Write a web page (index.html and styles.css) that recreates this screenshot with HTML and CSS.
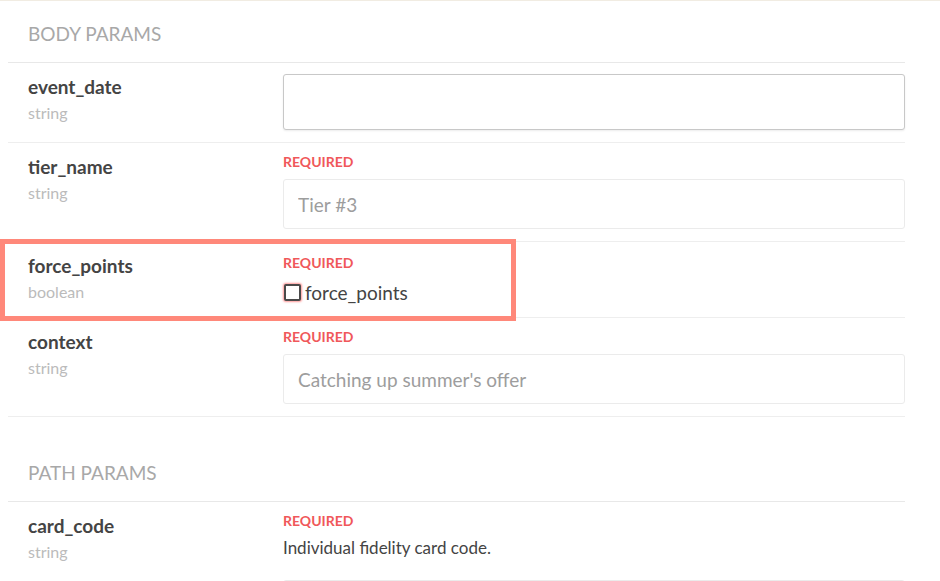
FILE: index.html
```html
<!DOCTYPE html>
<html lang="en">
<head>
    <meta charset="UTF-8">
    <title>Params</title>
    <link rel="stylesheet" href="styles.css">
</head>
<body>
    <div class="page">
        <div class="section">
            <div class="section-title">BODY PARAMS</div>

            <div class="param">
                <div class="param-info">
                    <div class="param-name">event_date</div>
                    <div class="param-type">string</div>
                </div>
                <div class="param-field">
                    <input class="field-input field-input--tall" type="text">
                </div>
            </div>

            <div class="param">
                <div class="param-info">
                    <div class="param-name">tier_name</div>
                    <div class="param-type">string</div>
                </div>
                <div class="param-field">
                    <div class="required">REQUIRED</div>
                    <input class="field-input" type="text" placeholder="Tier #3">
                </div>
            </div>

            <div class="param param--marked">
                <div class="highlight"></div>
                <div class="param-info">
                    <div class="param-name">force_points</div>
                    <div class="param-type">boolean</div>
                </div>
                <div class="param-field">
                    <div class="required">REQUIRED</div>
                    <label class="check">
                        <input class="check-box" type="checkbox">
                        <span>force_points</span>
                    </label>
                </div>
            </div>

            <div class="param">
                <div class="param-info">
                    <div class="param-name">context</div>
                    <div class="param-type">string</div>
                </div>
                <div class="param-field">
                    <div class="required">REQUIRED</div>
                    <input class="field-input" type="text" placeholder="Catching up summer's offer">
                </div>
            </div>
        </div>

        <div class="section section--next">
            <div class="section-title">PATH PARAMS</div>

            <div class="param param--open">
                <div class="param-info">
                    <div class="param-name">card_code</div>
                    <div class="param-type">string</div>
                </div>
                <div class="param-field">
                    <div class="required">REQUIRED</div>
                    <div class="param-desc">Individual fidelity card code.</div>
                    <input class="field-input field-input--below" type="text">
                </div>
            </div>
        </div>
    </div>
</body>
</html>
```

FILE: styles.css
```css
:root {
    --text-dark: #444;
    --text-muted: #bbbbbb;
    --title-gray: #a8a8a8;
    --line: #e8e8e8;
    --required: #f0585a;
    --marker: #ff887a;
}

* {
    box-sizing: border-box;
}

body {
    margin: 0;
    font-family: Lato, "Open Sans", sans-serif;
    color: var(--text-dark);
    background-color: #fff;
    border-top: 1px solid #f1ece2;
    overflow: hidden;
    height: 581px;
}

.page {
    padding-left: 8px;
    width: 905px;
}

.section--next {
    margin-top: 23px;
}

.section-title {
    padding: 22px 20px 18px;
    font-size: 19px;
    line-height: 21px;
    color: var(--title-gray);
    border-bottom: 1px solid var(--line);
}

.param {
    position: relative;
    display: flex;
    padding: 11px 0 12px;
    border-bottom: 1px solid #eeeeee;
}

.param--open {
    border-bottom: none;
}

.param-info {
    width: 275px;
    flex-shrink: 0;
    padding-left: 20px;
    padding-top: 1px;
}

.param-name {
    font-size: 19px;
    font-weight: 700;
    line-height: 24px;
    color: var(--text-dark);
}

.param-type {
    margin-top: 4px;
    font-size: 16px;
    line-height: 20px;
    color: var(--text-muted);
}

.param-field {
    flex: 1;
    display: flex;
    flex-direction: column;
}

.required {
    font-size: 14px;
    font-weight: 700;
    line-height: 16px;
    color: var(--required);
    margin-bottom: 9px;
}

.field-input {
    width: 100%;
    height: 50px;
    padding: 0 14px;
    border: 1px solid #ebebeb;
    border-radius: 3px;
    font-family: Lato, "Open Sans", sans-serif;
    font-size: 19px;
    color: var(--text-dark);
    background: #fff;
    outline: none;
}

.field-input::placeholder {
    color: #9d9d9d;
}

.field-input--tall {
    height: 56px;
    border-color: #c8c8c8;
    box-shadow: 0 1px 2px rgba(0, 0, 0, 0.08);
}

.field-input--below {
    margin-top: 21px;
}

.param--marked .required {
    margin-top: 2px;
    margin-bottom: 8px;
}

.check {
    display: flex;
    align-items: center;
    gap: 4px;
    height: 26px;
    font-size: 19px;
    color: var(--text-dark);
}

.check-box {
    appearance: none;
    -webkit-appearance: none;
    margin: 0 0 0 1px;
    width: 17px;
    height: 17px;
    border: 2px solid #4a4a4a;
    border-radius: 2px;
    background: #fff;
    box-shadow: 0 0 2px 1px rgba(255, 70, 70, 0.55);
}

.param-desc {
    font-size: 17px;
    line-height: 22px;
    color: var(--text-dark);
    margin-top: -1px;
}

/* annotation frame drawn over the force_points row */
.highlight {
    position: absolute;
    left: -8px;
    top: -3px;
    width: 516px;
    height: 82px;
    border: 5px solid var(--marker);
    pointer-events: none;
}
```
